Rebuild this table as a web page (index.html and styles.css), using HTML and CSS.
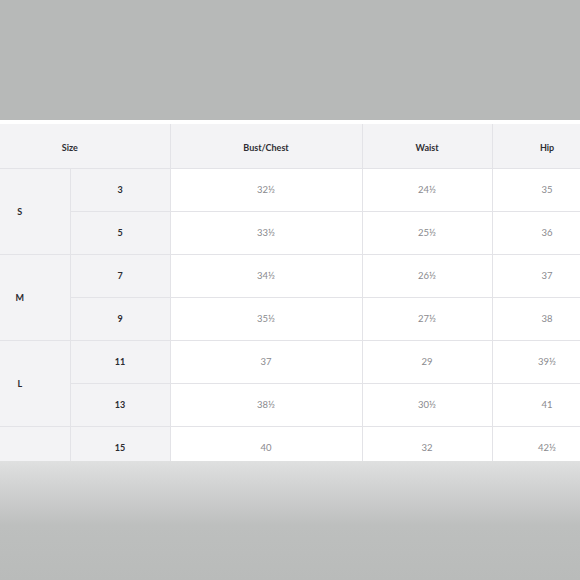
FILE: index.html
```html
<!DOCTYPE html>
<html>
<head>
<meta charset="utf-8">
<link rel="stylesheet" href="styles.css">
</head>
<body>
<div class="top"></div>
<div class="frame">
<table class="chart">
<colgroup>
<col class="c1"><col class="c2"><col class="c3"><col class="c4"><col class="c5">
</colgroup>
<thead>
<tr><th colspan="2">Size</th><th>Bust/Chest</th><th>Waist</th><th>Hip</th></tr>
</thead>
<tbody>
<tr><td class="grp" rowspan="2">S</td><td class="sz">3</td><td>32½</td><td>24½</td><td>35</td></tr>
<tr><td class="sz">5</td><td>33½</td><td>25½</td><td>36</td></tr>
<tr><td class="grp" rowspan="2">M</td><td class="sz">7</td><td>34½</td><td>26½</td><td>37</td></tr>
<tr><td class="sz">9</td><td>35½</td><td>27½</td><td>38</td></tr>
<tr><td class="grp" rowspan="2">L</td><td class="sz">11</td><td>37</td><td>29</td><td>39½</td></tr>
<tr><td class="sz">13</td><td>38½</td><td>30½</td><td>41</td></tr>
<tr><td class="grp"></td><td class="sz">15</td><td>40</td><td>32</td><td>42½</td></tr>
</tbody>
</table>
</div>
<div class="bottom"></div>
</body>
</html>
```
FILE: styles.css
```css
html, body {
  margin: 0;
  padding: 0;
  background: #b8bab9;
  width: 580px;
  height: 580px;
  overflow: hidden;
  font-family: Lato, "Open Sans", sans-serif;
}
.top {
  height: 120px;
  background: #b7b9b8;
}
.frame {
  height: 341px;
  overflow: hidden;
  background: #ffffff;
  border-top: 1px solid #ffffff;
  box-sizing: border-box;
  padding-top: 3px;
}
.chart {
  border-collapse: collapse;
  table-layout: fixed;
  width: 632px;
  margin-left: -30px;
}
.c1 { width: 100px; }
.c2 { width: 100px; }
.c3 { width: 192px; }
.c4 { width: 130px; }
.c5 { width: 110px; }
.chart th, .chart td {
  border: 1px solid #e3e3e7;
  text-align: center;
  padding: 0;
  height: 42px;
}
.chart th {
  background: #f3f3f5;
  color: #2e2e33;
  font-size: 9px;
  font-weight: 700;
  height: 44px;
  padding-top: 3px;
  box-sizing: border-box;
  border-top: none;
}
.chart td {
  color: #8a8a8e;
  font-size: 9.5px;
  background: #ffffff;
}
.chart tr > :first-child { border-left: none; }
.chart td.grp, .chart td.sz {
  background: #f3f3f5;
  color: #2b2b30;
  font-weight: 700;
  font-size: 9px;
}
.bottom {
  height: 119px;
  background: linear-gradient(to bottom, #dfe0e0 0px, #d2d3d3 25px, #bdbfbe 65px, #b9bbba 119px);
}
```
